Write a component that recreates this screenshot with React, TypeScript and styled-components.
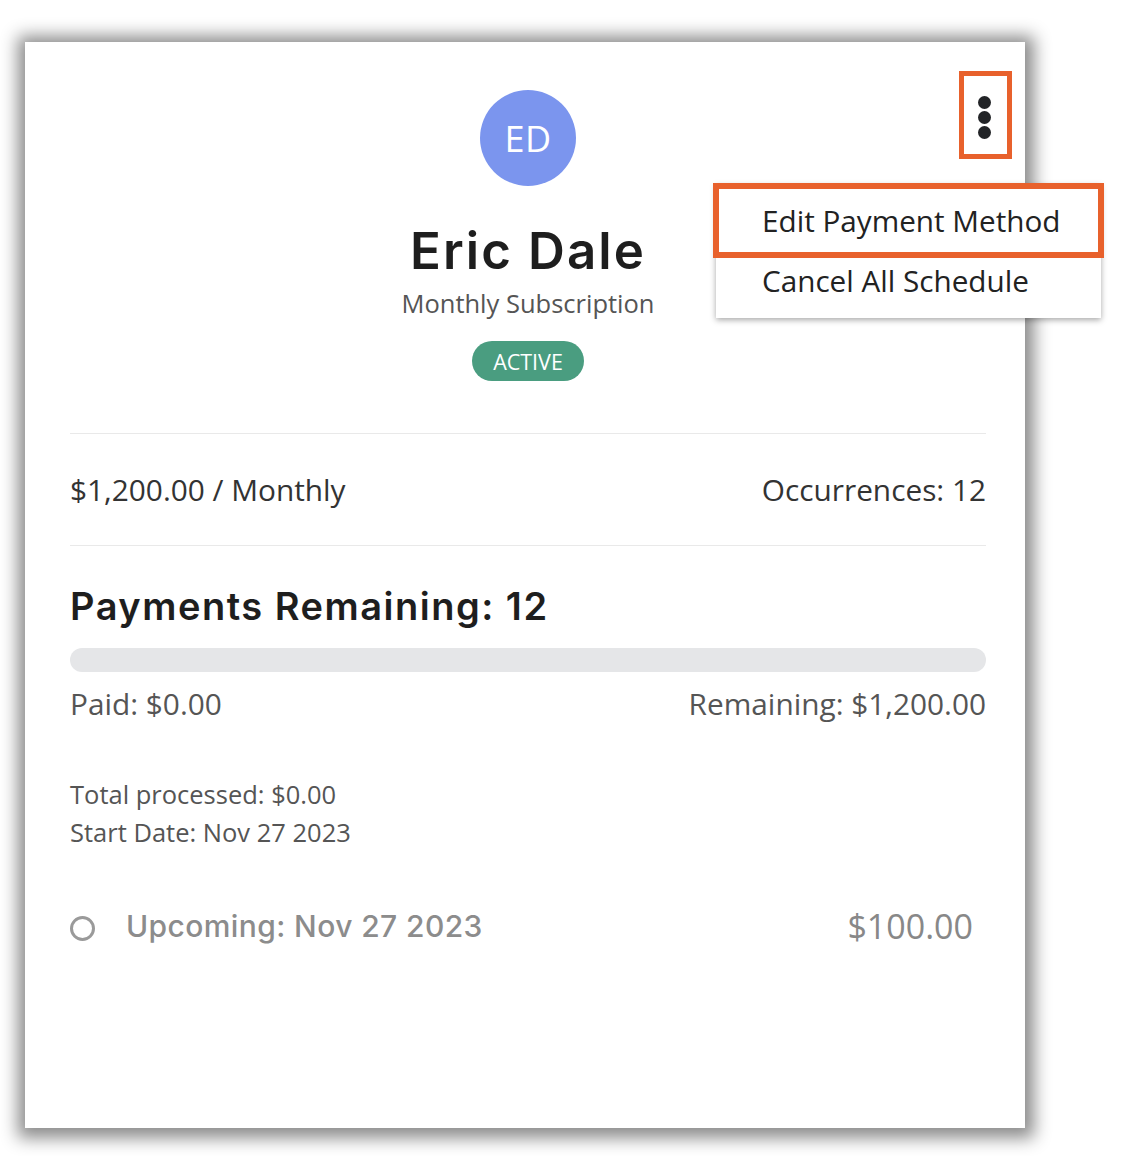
import styled, { createGlobalStyle } from 'styled-components'

const GlobalStyle = createGlobalStyle`
  html, body {
    margin: 0;
    padding: 0;
    background: #ffffff;
  }
  body {
    font-family: 'Open Sans', 'Noto Sans', sans-serif;
    -webkit-font-smoothing: antialiased;
  }
`

const HEADING_FONT = `'Inter', 'Open Sans', sans-serif`
const ORANGE = '#e8612c'

const Page = styled.div`
  width: 1128px;
  height: 1156px;
  padding: 42px 0 0 25px;
  box-sizing: border-box;
`

const Card = styled.section`
  position: relative;
  width: 1000px;
  height: 1086px;
  box-sizing: border-box;
  padding: 48px 39px 0 45px;
  background: #ffffff;
  box-shadow: 1px 2px 16px 8px rgba(0, 0, 0, 0.46);
`

const Header = styled.header`
  display: flex;
  flex-direction: column;
  align-items: center;
  padding-bottom: 52px;
  border-bottom: 1px solid #e9e9e9;
`

const Avatar = styled.div`
  width: 96px;
  height: 96px;
  border-radius: 50%;
  background: #7b95ee;
  color: #ffffff;
  display: flex;
  align-items: center;
  justify-content: center;
  font-size: 36px;
  font-weight: 500;
  letter-spacing: 0.5px;
`

const Name = styled.h1`
  margin: 36px 0 0;
  font-family: ${HEADING_FONT};
  font-size: 51px;
  line-height: 58px;
  font-weight: 600;
  letter-spacing: 2.1px;
  color: #1e1e1e;
`

const Plan = styled.div`
  margin-top: 5px;
  font-size: 25.5px;
  line-height: 36px;
  color: #555555;
`

const StatusBadge = styled.span`
  margin-top: 20px;
  height: 40px;
  padding: 0 21px;
  border-radius: 20px;
  background: #4a9d80;
  color: #ffffff;
  font-size: 21.5px;
  font-weight: 500;
  display: inline-flex;
  align-items: center;
`

const SummaryRow = styled.div`
  display: flex;
  justify-content: space-between;
  align-items: center;
  height: 111px;
  border-bottom: 1px solid #e9e9e9;
  font-size: 29.8px;
  color: #333333;
`

const Section = styled.div`
  padding-top: 38px;
`

const SectionTitle = styled.h2`
  margin: 0;
  font-family: ${HEADING_FONT};
  font-size: 38px;
  line-height: 44px;
  font-weight: 600;
  letter-spacing: 1.5px;
  color: #1e1e1e;
`

const ProgressTrack = styled.div`
  margin-top: 20px;
  height: 24px;
  border-radius: 12px;
  background: #e5e6e8;
  overflow: hidden;
`

const ProgressFill = styled.div`
  height: 100%;
  background: #4a9d80;
`

const AmountsRow = styled.div`
  display: flex;
  justify-content: space-between;
  margin-top: 12px;
  font-size: 29.8px;
  line-height: 40px;
  color: #555555;
`

const Details = styled.div`
  margin-top: 51px;
  font-size: 25.5px;
  line-height: 38px;
  color: #555555;
`

const UpcomingRow = styled.div`
  display: flex;
  align-items: center;
  margin-top: 52px;
  padding-right: 13px;
`

const RadioDot = styled.span`
  width: 19px;
  height: 19px;
  border-radius: 50%;
  border: 3px solid #9a9a9a;
  flex-shrink: 0;
  margin-top: 4px;
`

const UpcomingLabel = styled.span`
  margin-left: 31px;
  font-family: ${HEADING_FONT};
  font-size: 30px;
  font-weight: 500;
  color: #8c8c8c;
  letter-spacing: 0.4px;
`

const UpcomingAmount = styled.span`
  margin-left: auto;
  font-size: 34px;
  color: #888888;
`

const KebabButton = styled.button`
  position: absolute;
  top: 29px;
  right: 13px;
  width: 53px;
  height: 88px;
  box-sizing: border-box;
  border: 5px solid ${ORANGE};
  background: transparent;
  padding: 4px 3px 0 0;
  display: flex;
  flex-direction: column;
  align-items: center;
  justify-content: center;
  gap: 2px;
  cursor: pointer;
`

const Dot = styled.span`
  width: 13px;
  height: 13px;
  border-radius: 50%;
  background: #222427;
`

const Menu = styled.ul`
  position: absolute;
  top: 142px;
  left: 691px;
  width: 385px;
  margin: 0;
  padding: 6px 0 8px;
  list-style: none;
  background: #ffffff;
  box-shadow: 0 2px 6px rgba(0, 0, 0, 0.35);
  z-index: 2;
`

const MenuItem = styled.li<{ $highlighted?: boolean }>`
  position: relative;
  height: 60px;
  padding-left: 46px;
  display: flex;
  align-items: center;
  font-size: 29.7px;
  color: #222222;
  cursor: pointer;

  &::after {
    content: '';
    display: ${p => (p.$highlighted ? 'block' : 'none')};
    position: absolute;
    top: -7px;
    bottom: -8px;
    left: -3px;
    right: -3px;
    border: 6px solid ${ORANGE};
  }
`

export default function App() {
  const paid = 0
  const total = 1200

  return (
    <>
      <GlobalStyle />
      <Page>
        <Card>
          <Header>
            <Avatar>ED</Avatar>
            <Name>Eric Dale</Name>
            <Plan>Monthly Subscription</Plan>
            <StatusBadge>ACTIVE</StatusBadge>
          </Header>

          <SummaryRow>
            <span>$1,200.00 / Monthly</span>
            <span>Occurrences: 12</span>
          </SummaryRow>

          <Section>
            <SectionTitle>Payments Remaining: 12</SectionTitle>
            <ProgressTrack>
              <ProgressFill style={{ width: `${(paid / total) * 100}%` }} />
            </ProgressTrack>
            <AmountsRow>
              <span>Paid: $0.00</span>
              <span>Remaining: $1,200.00</span>
            </AmountsRow>

            <Details>
              <div>Total processed: $0.00</div>
              <div>Start Date: Nov 27 2023</div>
            </Details>

            <UpcomingRow>
              <RadioDot />
              <UpcomingLabel>Upcoming: Nov 27 2023</UpcomingLabel>
              <UpcomingAmount>$100.00</UpcomingAmount>
            </UpcomingRow>
          </Section>

          <KebabButton aria-label="More actions">
            <Dot />
            <Dot />
            <Dot />
          </KebabButton>

          <Menu>
            <MenuItem $highlighted>Edit Payment Method</MenuItem>
            <MenuItem>Cancel All Schedule</MenuItem>
          </Menu>
        </Card>
      </Page>
    </>
  )
}
